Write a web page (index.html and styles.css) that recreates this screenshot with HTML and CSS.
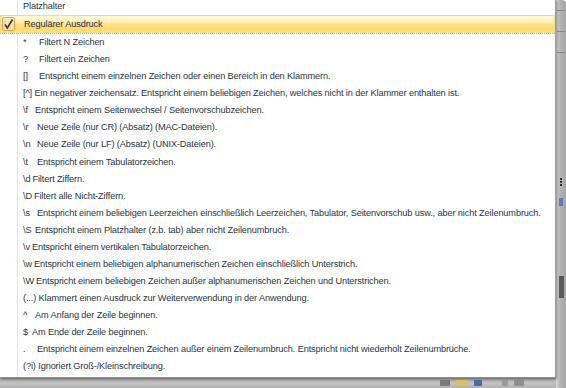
FILE: index.html
```html
<!DOCTYPE html>
<html lang="de">
<head>
    <meta charset="UTF-8">
    <title>Platzhalter</title>
    <link rel="stylesheet" href="styles.css">
</head>
<body>
    <div class="screen">
        <!-- Kontextmenü -->
        <div class="menu">
            <div class="item first">Platzhalter</div>
            <div class="item checked">
                <span class="check">
                    <svg width="13" height="14" viewBox="0 0 13 14"><path d="M3 7.5 L5.3 11 L10.5 2.5" fill="none" stroke="#1d3a6e" stroke-width="1.6"/></svg>
                </span>
                Regulärer Ausdruck
            </div>
            <div class="item"><span class="k k14">*</span>Filtert N Zeichen</div>
            <div class="item"><span class="k k14">?</span>Filtert ein Zeichen</div>
            <div class="item"><span class="k k14">[]</span>Entspricht einem einzelnen Zeichen oder einen Bereich in den Klammern.</div>
            <div class="item">[^] Ein negativer zeichensatz. Entspricht einem beliebigen Zeichen, welches nicht in der Klammer enthalten ist.</div>
            <div class="item"><span class="k k10">\f</span>Entspricht einem Seitenwechsel / Seitenvorschubzeichen.</div>
            <div class="item"><span class="k k12">\r</span>Neue Zeile (nur CR) (Absatz) (MAC-Dateien).</div>
            <div class="item"><span class="k k12">\n</span>Neue Zeile (nur LF) (Absatz) (UNIX-Dateien).</div>
            <div class="item"><span class="k k12">\t</span>Entspricht einem Tabulatorzeichen.</div>
            <div class="item"><span class="k k7">\d</span>Filtert Ziffern.</div>
            <div class="item"><span class="k k5">\D</span>Filtert alle Nicht-Ziffern.</div>
            <div class="item"><span class="k k12">\s</span>Entspricht einem beliebigen Leerzeichen einschließlich Leerzeichen, Tabulator, Seitenvorschub usw., aber nicht Zeilenumbruch.</div>
            <div class="item"><span class="k k10">\S</span>Entspricht einem Platzhalter (z.b. tab) aber nicht Zeilenumbruch.</div>
            <div class="item"><span class="k k4">\v</span>Entspricht einem vertikalen Tabulatorzeichen.</div>
            <div class="item"><span class="k k8">\w</span>Entspricht einem beliebigen alphanumerischen Zeichen einschließlich Unterstrich.</div>
            <div class="item"><span class="k k8">\W</span>Entspricht einem beliebigen Zeichen außer alphanumerischen Zeichen und Unterstrichen.</div>
            <div class="item">(...) Klammert einen Ausdruck zur Weiterverwendung in der Anwendung.</div>
            <div class="item"><span class="k k10">^</span>Am Anfang der Zeile beginnen.</div>
            <div class="item"><span class="k k7">$</span>Am Ende der Zeile beginnen.</div>
            <div class="item"><span class="k k12">.</span>Entspricht einem einzelnen Zeichen außer einem Zeilenumbruch. Entspricht nicht wiederholt Zeilenumbrüche.</div>
            <div class="item">(?i) Ignoriert Groß-/Kleinschreibung.</div>
        </div>

        <!-- Fenster dahinter -->
        <div class="side">
            <span class="tick"></span>
            <span class="tick"></span>
            <span class="tick"></span>
            <span class="dots"></span>
            <span class="blue"></span>
            <span class="thumb"></span>
        </div>
        <div class="status">
            <span class="mark m1"></span>
            <span class="mark m2"></span>
            <span class="mark m3"></span>
            <span class="mark m4"></span>
            <span class="mark m5"></span>
        </div>
    </div>
</body>
</html>
```

FILE: styles.css
```css
* {
    margin: 0;
    padding: 0;
    box-sizing: border-box;
}

body {
    width: 566px;
    height: 388px;
    overflow: hidden;
    font-family: "Liberation Sans", Arial, sans-serif;
    font-size: 9.2px;
    letter-spacing: -0.12px;
    color: #2a3347;
}

/* Bildschirm: Menü + Fensterränder */
.screen {
    display: grid;
    grid-template-columns: 556px 10px;
    grid-template-rows: 378px 10px;
    height: 388px;
}

/* Menü */
.menu {
    grid-column: 1;
    grid-row: 1;
    background: linear-gradient(to right, #fff 17px, #e3e4e6 17px, #e3e4e6 18px, #fff 18px);
    border-right: 1px solid #9aa0a8;
    border-bottom: 1px solid #8d9096;
    box-shadow: 1px 1px 2px rgba(0, 0, 0, 0.35);
    position: relative;
    z-index: 1;
}

.item {
    height: 17.08px;
    line-height: 17px;
    padding-left: 23px;
    white-space: nowrap;
}

.item.first {
    height: 15px;
    line-height: 12px;
}

/* markierte Zeile */
.item.checked {
    height: 18px;
    line-height: 17px;
    margin-bottom: 1px;
    display: flex;
    align-items: center;
    position: relative;
    border: 1px solid #f1d98e;
    background: linear-gradient(#fffae0, #feeeb0 40%, #fde08a 55%, #fdd866 80%, #fde585);
    color: #233049;
}

.item.checked::after {
    content: "";
    position: absolute;
    left: -1px;
    right: -1px;
    bottom: -2px;
    border-bottom: 1px dotted #b8b8b8;
}

.check {
    position: absolute;
    left: 1px;
    top: 1px;
    width: 13px;
    height: 14px;
    border: 1px solid #eaa54a;
    border-radius: 2px;
    background: linear-gradient(#fdebb8, #fcd88a);
}

.check svg {
    display: block;
    margin: -1px 0 0 -1px;
}

/* Kürzel vor der Beschreibung */
.k {
    display: inline-block;
    margin-right: 2px;
}

.k4 { min-width: 4px; }
.k5 { min-width: 5px; }
.k7 { min-width: 7px; }
.k8 { min-width: 8px; }
.k10 { min-width: 10px; }
.k12 { min-width: 12px; }
.k14 { min-width: 14px; }

/* Scrollleiste des Fensters dahinter */
.side {
    grid-column: 2;
    grid-row: 1 / 3;
    background: linear-gradient(to right, #d8d8d8, #b4b4b4 40%, #a6a6a6);
    border-top-right-radius: 4px;
    display: flex;
    flex-direction: column;
    align-items: center;
    padding-top: 10px;
    gap: 20px;
}

.tick {
    width: 8px;
    height: 1px;
    background: #8a8a8a;
}

.dots {
    margin-top: 105px;
    width: 2px;
    height: 8px;
    background: repeating-linear-gradient(#333 0 2px, transparent 2px 3px);
}

.blue {
    margin-top: -8px;
    width: 4px;
    height: 8px;
    background: #5a7cb8;
}

.thumb {
    margin-top: 50px;
    width: 5px;
    height: 22px;
    background: #5a5a5a;
}

/* Statusleiste */
.status {
    grid-column: 1;
    grid-row: 2;
    background: linear-gradient(#9a9a9a, #c4c4c4 50%, #b0b0b0);
    display: flex;
    align-items: center;
    gap: 6px;
    padding-left: 440px;
}

.mark {
    height: 6px;
    width: 10px;
    background: #7a7a7a;
}

.m2 { background: #d8c060; width: 12px; }
.m3 { background: #4a6aa8; width: 8px; }
.m4 { background: #9a9a9a; width: 6px; margin-left: 14px; }
.m5 { background: #909090; width: 10px; }
```
